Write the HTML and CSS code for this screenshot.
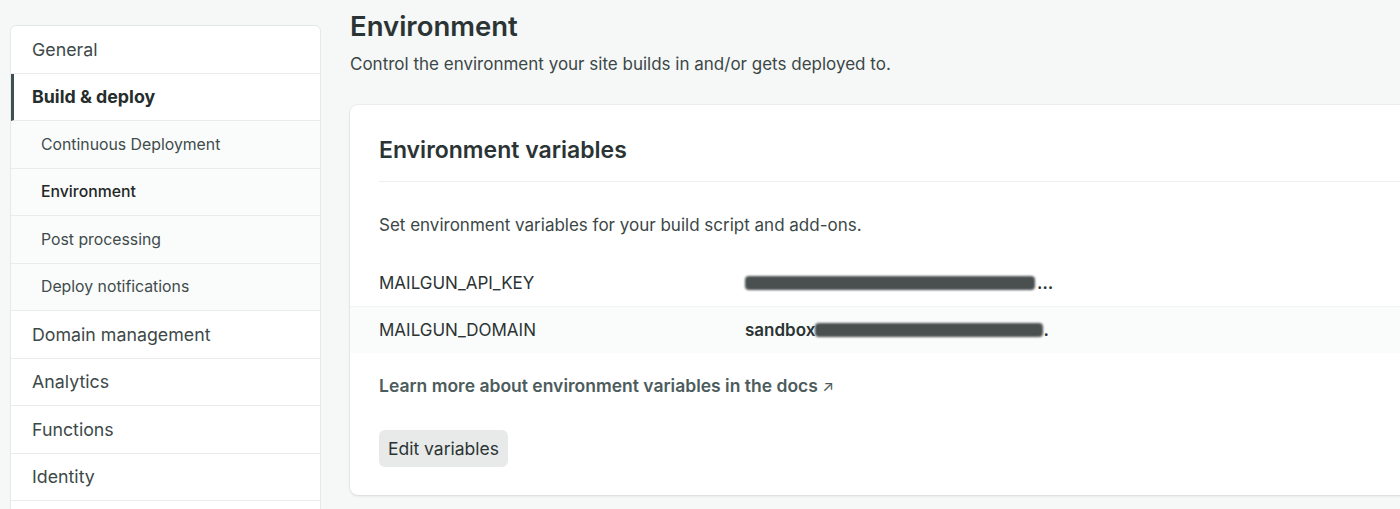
FILE: index.html
```html
<!DOCTYPE html>
<html>
<head>
<meta charset="utf-8">
<link rel="stylesheet" href="styles.css">
</head>
<body>
<div class="page">
  <nav class="sidebar">
    <div class="nav-item">General</div>
    <div class="nav-item active">Build &amp; deploy</div>
    <div class="nav-sub">Continuous Deployment</div>
    <div class="nav-sub current">Environment</div>
    <div class="nav-sub">Post processing</div>
    <div class="nav-sub">Deploy notifications</div>
    <div class="nav-item">Domain management</div>
    <div class="nav-item">Analytics</div>
    <div class="nav-item">Functions</div>
    <div class="nav-item">Identity</div>
    <div class="nav-item"></div>
  </nav>
  <main class="main">
    <h1 class="title">Environment</h1>
    <p class="subtitle">Control the environment your site builds in and/or gets deployed to.</p>
    <section class="card">
      <h2 class="card-title">Environment variables</h2>
      <div class="card-body">
        <p class="desc">Set environment variables for your build script and add-ons.</p>
        <div class="vars">
          <div class="var-row">
            <span class="var-key">MAILGUN_API_KEY</span>
            <span class="var-val"><span class="redact r1"></span>…</span>
          </div>
          <div class="var-row alt">
            <span class="var-key">MAILGUN_DOMAIN</span>
            <span class="var-val">sandbox<span class="redact r2"></span>.</span>
          </div>
        </div>
        <a class="docs-link">Learn more about environment variables in the docs <span class="arrow">↗</span></a>
        <button class="btn">Edit variables</button>
      </div>
    </section>
  </main>
</div>
</body>
</html>
```

FILE: styles.css
```css
* { box-sizing: border-box; }
html, body { margin: 0; padding: 0; }
body {
  background: #f6f7f7;
  font-family: Inter, "Noto Sans", "Liberation Sans", sans-serif;
  color: #2f3a3a;
  width: 1400px;
  height: 509px;
  overflow: hidden;
}
.page {
  display: flex;
  gap: 29px;
  padding-left: 10px;
}
.sidebar {
  width: 311px;
  flex: none;
  margin-top: 25px;
  background: #fff;
  border: 1px solid #e6e9e9;
  border-radius: 6px;
  overflow: hidden;
}
.nav-item, .nav-sub {
  height: 47.5px;
  display: flex;
  align-items: center;
  border-bottom: 1px solid #e9ecec;
  color: #3d4949;
}
.nav-item {
  padding-left: 21px;
  font-size: 17.8px;
}
.nav-item.active {
  font-weight: 700;
  color: #252d2d;
  border-left: 3px solid #3f5050;
  padding-left: 18px;
}
.nav-sub {
  padding-left: 30px;
  font-size: 15.8px;
  background: #fafbfb;
  color: #3f4c4c;
}
.nav-sub.current {
  color: #1f2727;
  font-weight: 500;
}
.main {
  flex: 1;
  min-width: 0;
}
.title {
  margin: 9px 0 0;
  font-size: 27.5px;
  font-weight: 600;
  line-height: 34px;
  color: #2b3434;
}
.subtitle {
  margin: 9px 0 0;
  font-size: 17px;
  line-height: 24px;
  color: #3b4747;
}
.card {
  margin-top: 29px;
  width: 1100px;
  background: #fff;
  border-radius: 8px 0 0 8px;
  box-shadow: 0 1px 3px rgba(0,0,0,0.10), 0 0 0 1px rgba(0,0,0,0.03);
  padding-bottom: 28px;
}
.card-title {
  margin: 0 0 0 29px;
  padding: 31px 0 17px;
  font-size: 23px;
  font-weight: 600;
  line-height: 28px;
  color: #2b3434;
  border-bottom: 1px solid #eef0f0;
}
.card-body {
  display: flex;
  flex-direction: column;
  align-items: flex-start;
}
.desc {
  margin: 31px 0 0 29px;
  font-size: 17px;
  line-height: 24px;
  color: #3b4747;
}
.vars {
  margin-top: 22px;
  width: 100%;
}
.var-row {
  height: 47px;
  display: flex;
  align-items: center;
  padding-left: 29px;
  font-size: 17px;
  color: #2b3434;
}
.var-row.alt { background: #fafbfb; border-top: 1px solid #f3f4f4; }
.var-key { width: 366px; flex: none; }
.var-val { font-weight: 600; display: flex; align-items: center; }
.redact {
  display: inline-block;
  height: 14px;
  background: #4a4f50;
  border-radius: 4px;
  filter: blur(1px);
}
.r1 { width: 290px; margin-right: 2px; }
.r2 { width: 228px; }
.docs-link {
  margin: 21px 0 0 29px;
  font-size: 17.5px;
  font-weight: 600;
  line-height: 24px;
  color: #4c5c5c;
}
.arrow { font-size: 15px; font-weight: 400; }
.btn {
  margin: 31px 0 0 29px;
  height: 37px;
  padding: 0 9px;
  border: none;
  border-radius: 6px;
  background: #e8eaea;
  font-family: inherit;
  font-size: 17.5px;
  color: #2b3434;
}
```
